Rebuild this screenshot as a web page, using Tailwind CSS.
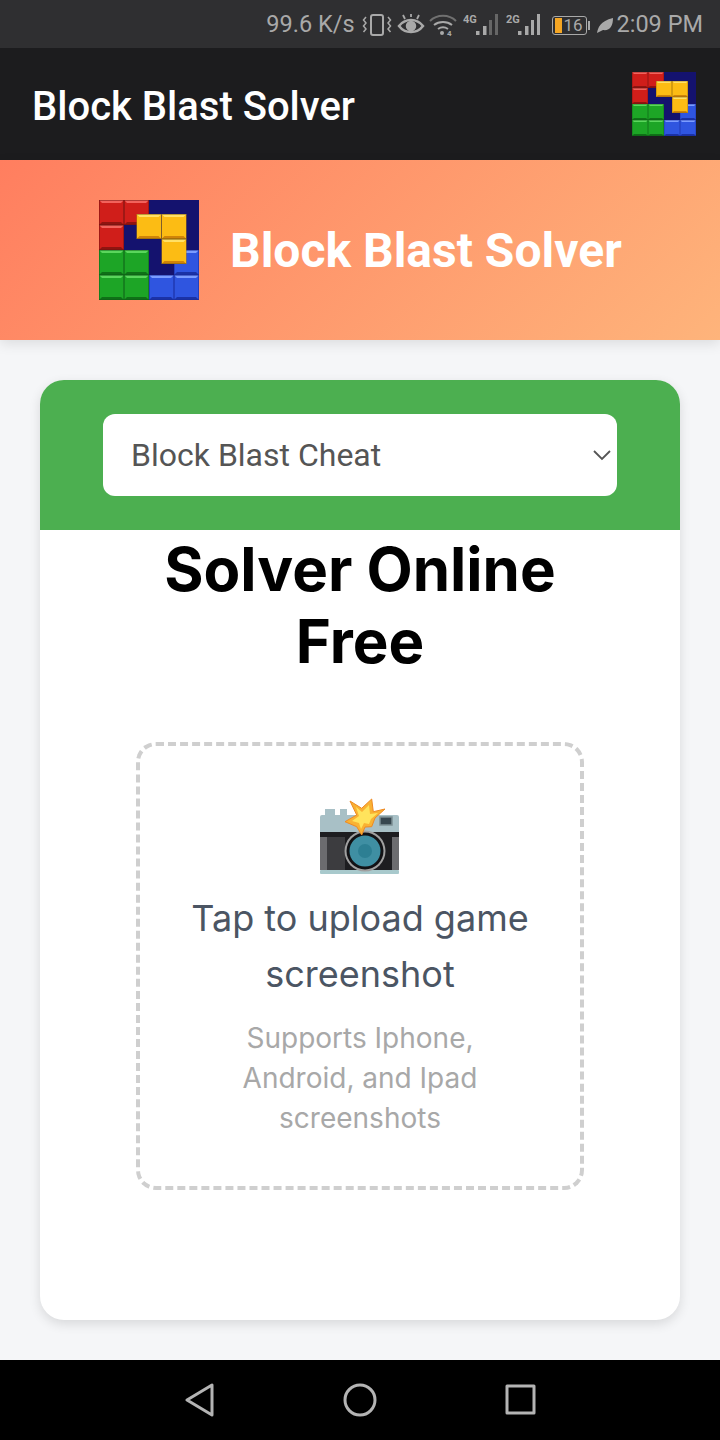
<!DOCTYPE html>
<html lang="en">
<head>
    <meta charset="UTF-8">
    <meta name="viewport" content="width=device-width, initial-scale=1.0">
    <title>Block Blast Solver</title>
    <script src="https://cdn.jsdelivr.net/npm/@tailwindcss/browser@4"></script>
</head>
<body class="bg-[#f5f6f8] font-['Inter',sans-serif]">
    <!-- shared logo parts -->
    <svg class="hidden" xmlns="http://www.w3.org/2000/svg">
        <symbol id="cellRed" viewBox="0 0 25 25"><rect width="25" height="25" fill="#d01e1a"/><path d="M0 0h25l-3 3H3z" fill="#f2625c"/><path d="M0 25h25l-3-3H3z" fill="#8f1410"/><rect x=".25" y=".25" width="24.500" height="24.500" fill="none" stroke="#6e1210" stroke-width=".5"/></symbol>
        <symbol id="cellGreen" viewBox="0 0 25 25"><rect width="25" height="25" fill="#1da526"/><path d="M0 0h25l-3 3H3z" fill="#5ad65c"/><path d="M0 25h25l-3-3H3z" fill="#0f7017"/><rect x=".25" y=".25" width="24.500" height="24.500" fill="none" stroke="#0e5c16" stroke-width=".5"/></symbol>
        <symbol id="cellBlue" viewBox="0 0 25 25"><rect width="25" height="25" fill="#2f55e0"/><path d="M0 0h25l-3 3H3z" fill="#7b9cff"/><path d="M0 25h25l-3-3H3z" fill="#1b32a6"/><rect x=".25" y=".25" width="24.500" height="24.500" fill="none" stroke="#182a9a" stroke-width=".5"/></symbol>
        <symbol id="cellYellow" viewBox="0 0 25 25"><rect width="25" height="25" fill="#fcbc14"/><path d="M0 0h25l-3 3H3z" fill="#ffe066"/><path d="M0 25h25l-3-3H3z" fill="#d08408"/><rect x=".25" y=".25" width="24.500" height="24.500" fill="none" stroke="#7d5a08" stroke-width=".5"/></symbol>
        <symbol id="logo" viewBox="0 0 100 100">
            <rect width="100" height="100" fill="#14126e"/>
            <use href="#cellRed" x="0" y="0" width="25" height="25"/>
            <use href="#cellRed" x="25" y="0" width="25" height="25"/>
            <use href="#cellRed" x="0" y="25" width="25" height="25"/>
            <use href="#cellGreen" x="0" y="50" width="25" height="25"/>
            <use href="#cellGreen" x="25" y="50" width="25" height="25"/>
            <use href="#cellGreen" x="0" y="75" width="25" height="25"/>
            <use href="#cellGreen" x="25" y="75" width="25" height="25"/>
            <use href="#cellBlue" x="75" y="50" width="25" height="25"/>
            <use href="#cellBlue" x="50" y="75" width="25" height="25"/>
            <use href="#cellBlue" x="75" y="75" width="25" height="25"/>
            <use href="#cellYellow" x="37.5" y="14" width="25" height="25"/>
            <use href="#cellYellow" x="62.5" y="14" width="25" height="25"/>
            <use href="#cellYellow" x="62.5" y="39" width="25" height="25"/>
        </symbol>
    </svg>

    <div class="w-[720px] h-[1440px] flex flex-col overflow-hidden">
        <!-- status bar -->
        <div class="h-12 shrink-0 bg-[#2f2f31] flex items-center justify-end pr-[17px] pt-[2px] text-[#a9a9a9] font-['Roboto',sans-serif] text-[23.5px]">
            <span class="mr-[7px]">99.6 K/s</span>
            <svg class="mr-[5px]" width="30" height="28" viewBox="0 0 30 28" fill="none" stroke="#a9a9a9" stroke-width="2"><rect x="9" y="4" width="12" height="20" rx="2"/><path d="M4 6L1.500 9 4 12 1.500 15 4 18 1.500 21M26 6l2.500 3-2.500 3 2.500 3-2.500 3 2.500 3" stroke-width="1.500"/></svg>
            <svg class="mr-[4px]" width="28" height="28" viewBox="0 0 28 28" fill="none" stroke="#a9a9a9" stroke-width="2.500"><path d="M2 15c6-8 18-8 24 0-6 8-18 8-24 0z"/><circle cx="14" cy="15" r="4" fill="#a9a9a9"/><path d="M8 8L6 4M14 6V3M20 8l2-4" stroke-width="1.800"/></svg>
            <svg class="mr-[6px]" width="28" height="28" viewBox="0 0 28 28" fill="none" stroke="#a9a9a9" stroke-width="2"><path d="M1 10c7-7 19-7 26 0" stroke="#707070"/><path d="M5 14c5-4 13-4 18 0"/><path d="M9 18c3-2 7-2 10 0"/><circle cx="13" cy="22" r="2" fill="#a9a9a9" stroke="none"/><text x="18" y="25" font-size="8" font-weight="700" font-family="Roboto" fill="#a9a9a9" stroke="none">4</text></svg>
            <svg class="mr-[7px]" width="36" height="28" viewBox="0 0 36 28" fill="#a9a9a9"><text x="0" y="12" font-size="11" font-weight="700" font-family="Roboto">4G</text><rect x="13" y="20" width="3.500" height="4"/><rect x="20" y="15" width="3.500" height="9"/><rect x="26" y="9" width="3" height="15" fill="#666"/><rect x="32" y="3" width="3" height="21" fill="#666"/></svg>
            <svg class="mr-[10px]" width="36" height="28" viewBox="0 0 36 28" fill="#a9a9a9"><text x="0" y="12" font-size="11" font-weight="700" font-family="Roboto">2G</text><rect x="12" y="20" width="3.500" height="4"/><rect x="19" y="15" width="3.500" height="9"/><rect x="25" y="9" width="3" height="15"/><rect x="31" y="3" width="3" height="21"/></svg>
            <div class="flex items-center mr-[7px]">
                <div class="w-[35px] h-[19px] border border-[#a9a9a9] rounded-[3px] flex items-center text-[17px] leading-none pl-[2px]">
                    <span class="w-[7px] h-[15px] bg-[#f5a623] mr-[2px]"></span><span>16</span>
                </div>
                <span class="w-[2px] h-[9px] bg-[#a9a9a9] ml-[1px]"></span>
            </div>
            <svg class="mr-[4px]" width="16" height="18" viewBox="0 0 16 18" fill="#a9a9a9"><path d="M0 17C1 12 3 5 16 2c0 8-3 13-10 12z"/></svg>
            <span>2:09 PM</span>
        </div>

        <!-- app bar -->
        <div class="h-[112px] shrink-0 bg-[#1c1c1e] flex items-center justify-between pl-[33px] pr-[24px]">
            <span class="mt-[5px] -ml-[1px] text-white text-[40px] font-medium font-['Roboto',sans-serif]">Block Blast Solver</span>
            <svg class="w-16 h-16"><use href="#logo"/></svg>
        </div>

        <!-- hero -->
        <div class="h-[180px] shrink-0 bg-[linear-gradient(135deg,#ff7e5f,#feb47b)] flex items-center pl-[99px] gap-[31px] shadow-[0_4px_12px_rgba(0,0,0,0.1)]">
            <svg class="w-[100px] h-[100px]"><use href="#logo"/></svg>
            <span class="mt-[2px] text-white text-[48px] font-bold font-['Roboto',sans-serif]">Block Blast Solver</span>
        </div>

        <!-- main card -->
        <div class="flex-1 px-10 pt-10 pb-10">
            <div class="h-[940px] bg-white rounded-[24px] shadow-[0_4px_12px_rgba(0,0,0,0.12)] overflow-hidden flex flex-col items-center">
                <div class="w-full h-[150px] shrink-0 bg-[#4caf50] flex items-center justify-center">
                    <div class="w-[514px] h-[82px] bg-white rounded-[12px] flex items-center justify-between pl-[28px] pr-[6px]">
                        <span class="text-[32px] text-[#555] font-['Roboto',sans-serif]">Block Blast Cheat</span>
                        <svg width="18" height="12" viewBox="0 0 18 12" fill="none" stroke="#555" stroke-width="1.800"><path d="M1 2l8 8 8-8"/></svg>
                    </div>
                </div>
                <h1 class="mt-[3px] w-[440px] text-center text-[60px] leading-[72px] font-bold text-black">Solver Online Free</h1>
                <div class="mt-[65px] w-[448px] h-[448px] border-[4px] border-dashed border-[#cfcfcf] rounded-[20px] flex flex-col items-center text-center pt-[50px]">
                    <svg width="84" height="80" viewBox="0 0 84 80">
                        <path d="M7 13h10v6h5v-6h7v6h50a2 2 0 0 1 2 2v17H2V21a2 2 0 0 1 2-2h3z" fill="#a8c0c6"/>
                        <rect x="2" y="36" width="79" height="38" fill="#1d1d20"/>
                        <rect x="2" y="41" width="7" height="33" fill="#6c6c6f"/>
                        <rect x="9" y="41" width="18" height="33" fill="#3c3c3f"/>
                        <rect x="74" y="41" width="7" height="33" fill="#6c6c6f"/>
                        <rect x="2" y="74" width="79" height="4" rx="1" fill="#a8c9cc"/>
                        <rect x="62" y="21" width="12" height="8" fill="#37474f" stroke="#7c8f94" stroke-width="1.500"/>
                        <circle cx="47" cy="55" r="20.500" fill="#a0a0a0"/>
                        <circle cx="47" cy="55" r="18.500" fill="#121215"/>
                        <circle cx="47" cy="55" r="15.500" fill="#3f8fa3"/>
                        <circle cx="47" cy="55" r="7" fill="#2d7f93"/>
                        <path d="M32 5L43.700 12.300 53.700 3 55.300 15.700 67 13 57 22 53.700 30.700 47 31 43.700 39 38.700 30.700 27 25.700 38.700 19z" fill="#f9b233" stroke="#ef8a22" stroke-width="1" stroke-linejoin="round"/>
                        <path d="M38 11L44 16 51 9 52 18 60 17 53 23 51 28 46 27 43 33 41 27 34 25 41 20z" fill="#ffe35c"/>
                    </svg>
                    <p class="mt-[14px] w-[400px] text-[36px] leading-[56px] text-[#4b5563]">Tap to upload game screenshot</p>
                    <p class="mt-[16px] w-[280px] text-[28px] leading-[40px] text-[#a8a8a8]">Supports Iphone, Android, and Ipad screenshots</p>
                </div>
            </div>
        </div>

        <!-- nav bar -->
        <div class="h-20 shrink-0 bg-black flex items-center">
            <svg class="ml-[185px]" width="30" height="36" viewBox="0 0 30 36" fill="none" stroke="#b4b4b4" stroke-width="3" stroke-linejoin="round"><path d="M27 3v30L2 18z"/></svg>
            <svg class="ml-[127px]" width="36" height="36" viewBox="0 0 36 36" fill="none" stroke="#b4b4b4" stroke-width="3"><circle cx="18" cy="18" r="15"/></svg>
            <svg class="ml-[127px]" width="32" height="32" viewBox="0 0 32 32" fill="none" stroke="#b4b4b4" stroke-width="3" stroke-linejoin="round"><rect x="2" y="2" width="27" height="27"/></svg>
        </div>
    </div>
</body>
</html>
